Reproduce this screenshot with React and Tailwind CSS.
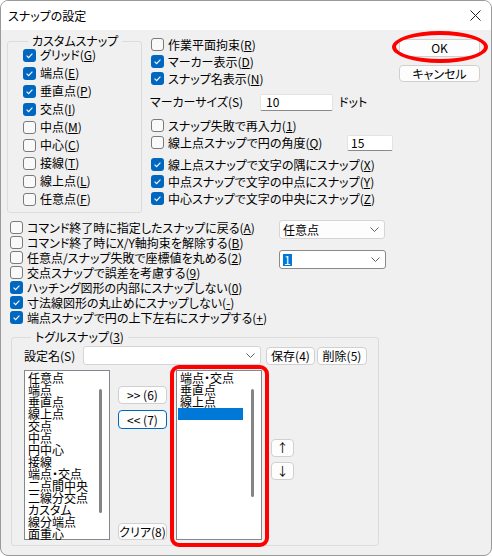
import React from 'react';

const customSnaps = [
  { label: 'グリッド', k: 'G', checked: true },
  { label: '端点', k: 'E', checked: true },
  { label: '垂直点', k: 'P', checked: true },
  { label: '交点', k: 'I', checked: true },
  { label: '中点', k: 'M', checked: false },
  { label: '中心', k: 'C', checked: false },
  { label: '接線', k: 'T', checked: false },
  { label: '線上点', k: 'L', checked: false },
  { label: '任意点', k: 'F', checked: false },
];

const textSnaps = [
  { label: '線上点スナップで文字の隅にスナップ', k: 'X' },
  { label: '中点スナップで文字の中点にスナップ', k: 'Y' },
  { label: '中心スナップで文字の中央にスナップ', k: 'Z' },
];

const options = [
  { label: 'コマンド終了時に指定したスナップに戻る', k: 'A', checked: false },
  { label: 'コマンド終了時にX/Y軸拘束を解除する', k: 'B', checked: false },
  { label: '任意点/スナップ失敗で座標値を丸める', k: '2', checked: false },
  { label: '交点スナップで誤差を考慮する', k: '9', checked: false },
  { label: 'ハッチング図形の内部にスナップしない', k: '0', checked: true },
  { label: '寸法線図形の丸止めにスナップしない', k: '-', checked: true },
  { label: '端点スナップで円の上下左右にスナップする', k: '+', checked: true },
];

const allSnaps = [
  '任意点', '端点', '垂直点', '線上点', '交点', '中点', '円中心', '接線',
  '端点・交点', '二点間中央', '二線分交点', 'カスタム', '線分端点', '面重心',
];

const toggleSnaps = ['端点・交点', '垂直点', '線上点'];

const Key = ({ k }) => (
  <span>
    (<u className="underline-offset-[1px]">{k}</u>)
  </span>
);

const CheckBox = ({ checked }) =>
  checked ? (
    <span className="w-[13px] h-[13px] shrink-0 rounded-[3px] bg-[#0067c0] flex items-center justify-center">
      <svg width="13" height="13" viewBox="0 0 13 13">
        <path d="M3.6 6.7 L5.6 8.6 L9.4 4.6" stroke="#fff" strokeWidth="1.1" fill="none" />
      </svg>
    </span>
  ) : (
    <span className="w-[13px] h-[13px] shrink-0 rounded-[3px] border border-[#7a7a7a] bg-[#f9f9f9]" />
  );

const CheckRow = ({ label, k, checked, className = 'h-[17px]' }) => (
  <div className={`flex items-center gap-1 ${className}`}>
    <CheckBox checked={checked} />
    <span className="whitespace-nowrap">
      {label}
      <Key k={k} />
    </span>
  </div>
);

const Chevron = () => (
  <svg width="9" height="5" viewBox="0 0 9 5">
    <path d="M0.5 0.5 L4.5 4.5 L8.5 0.5" stroke="#606060" strokeWidth="1" fill="none" />
  </svg>
);

const Btn = ({ children, className = '' }) => (
  <div
    className={`flex items-center justify-center rounded-[4px] border bg-[#fdfdfd] whitespace-nowrap leading-none ${className}`}
  >
    {children}
  </div>
);

const ListBox = ({ items, selected, barHeight }) => (
  <div className="w-[86px] h-[170px] border border-[#828790] bg-white flex">
    <div className="w-[65px] ml-[1px] pt-[1px] flex flex-col">
      {items.map((it) => (
        <div key={it} className="h-[12px] leading-[12px] pl-[2px] whitespace-nowrap">
          {it}
        </div>
      ))}
      {selected && <div className="h-[12px] bg-[#0078d7]" />}
    </div>
    <div className="flex-1 flex justify-end">
      <div className="w-[3px] mr-[7px] mt-[18px] rounded-full bg-[#858585]" style={{ height: barHeight }} />
    </div>
  </div>
);

export default function App() {
  return (
    <div className="w-[492px] h-[556px] border border-[#9a9a9a] rounded-[8px] overflow-hidden flex flex-col bg-[#f0f0f0] text-black text-[12px] leading-[16px] font-['Noto_Sans_CJK_JP',sans-serif] [font-feature-settings:'palt']">
      {/* Title bar */}
      <div className="h-[29px] shrink-0 bg-white flex items-center justify-between pl-[7px] pr-[10px]">
        <span>スナップの設定</span>
        <svg width="11" height="11" viewBox="0 0 11 11">
          <path d="M0.5 0.5 L10.5 10.5 M10.5 0.5 L0.5 10.5" stroke="#222" strokeWidth="1" />
        </svg>
      </div>

      {/* Top section */}
      <div className="flex items-start">
        <fieldset className="ml-[6px] mt-[4px] w-[135px] h-[179px] border border-[#dcdcdc] rounded-[3px] pl-[15px]">
          <legend className="ml-[5px] px-[4px] leading-[14px]">カスタムスナップ</legend>
          <div className="-mt-[2px] flex flex-col">
            {customSnaps.map((s) => (
              <CheckRow key={s.k} {...s} className="h-[18px]" />
            ))}
          </div>
        </fieldset>

        <div className="ml-[9px] mt-[6px] w-[242px] flex flex-col">
          <CheckRow label="作業平面拘束" k="R" checked={false} />
          <CheckRow label="マーカー表示" k="D" checked />
          <CheckRow label="スナップ名表示" k="N" checked />
          <div className="mt-[6px] h-[18px] flex items-center">
            <span className="w-[110px] -ml-[1px]">マーカーサイズ(S)</span>
            <div className="w-[73px] h-[17px] bg-white border border-[#e3e3e3] border-b-[#8a8a8a] rounded-[2px] pl-[5px] flex items-center">
              10
            </div>
            <span className="ml-[6px]">ドット</span>
          </div>
          <CheckRow label="スナップ失敗で再入力" k="1" checked={false} className="h-[17px] mt-[6px]" />
          <div className="h-[17px] flex items-center">
            <div className="w-[196px]">
              <CheckRow label="線上点スナップで円の角度" k="Q" checked={false} />
            </div>
            <div className="w-[46px] h-[16px] bg-white border border-[#e3e3e3] border-b-[#8a8a8a] rounded-[2px] pl-[3px] flex items-center">
              15
            </div>
          </div>
          <div className="mt-[5px] flex flex-col">
            {textSnaps.map((s) => (
              <CheckRow key={s.k} {...s} checked />
            ))}
          </div>
        </div>

        <div className="ml-[6px] mt-[9px] flex flex-col">
          <div className="relative">
            <Btn className="w-[81px] h-[18px] border-[#d0d0d0]">OK</Btn>
            <div className="absolute -left-[7px] -top-[8px] -right-[8px] -bottom-[6px] border-[4px] border-[#ff0000] rounded-[50%]" />
          </div>
          <Btn className="w-[81px] h-[17px] mt-[8px] border-[#d0d0d0]">キャンセル</Btn>
        </div>
      </div>

      {/* Options */}
      <div className="mt-[7px] flex items-start">
        <div className="ml-[9px] w-[269px] flex flex-col">
          {options.map((o) => (
            <CheckRow key={o.k} {...o} className="h-[15px]" />
          ))}
        </div>
        <div className="flex flex-col">
          <div className="w-[106px] h-[19px] bg-[#fdfdfd] border border-[#d5d5d5] rounded-[3px] pl-[3px] pr-[5px] flex items-center justify-between">
            <span>任意点</span>
            <Chevron />
          </div>
          <div className="mt-[11px] w-[107px] h-[19px] bg-white border border-[#8a8a8a] rounded-[3px] pl-[3px] pr-[5px] flex items-center justify-between">
            <span className="bg-[#0078d7] text-white leading-[12px] px-[1px]">1</span>
            <Chevron />
          </div>
        </div>
      </div>

      {/* Toggle snap */}
      <fieldset className="ml-[10px] mt-[5px] w-[368px] h-[216px] border border-[#dcdcdc] rounded-[3px] pl-[12px]">
        <legend className="ml-[7px] px-[4px] leading-[14px]">
          トグルスナップ<Key k="3" />
        </legend>
        <div className="mt-[2px] flex items-center">
          <span className="w-[59px]">設定名(S)</span>
          <div className="w-[178px] h-[19px] bg-white border border-[#d5d5d5] rounded-[3px] pr-[5px] flex items-center justify-end">
            <Chevron />
          </div>
          <Btn className="ml-[5px] w-[49px] h-[18px] border-[#d0d0d0]">保存(4)</Btn>
          <Btn className="ml-[2px] w-[50px] h-[18px] border-[#d0d0d0]">削除(5)</Btn>
        </div>
        <div className="mt-[5px] flex items-start">
          <ListBox items={allSnaps} barHeight={124} />
          <div className="ml-[8px] w-[49px] h-[170px] flex flex-col">
            <Btn className="mt-[16px] h-[18px] border-[#d0d0d0]">&gt;&gt; (6)</Btn>
            <Btn className="mt-[6px] h-[19px] border-[#0067c0]">&lt;&lt; (7)</Btn>
            <Btn className="mt-auto h-[17px] border-[#d0d0d0]">クリア(8)</Btn>
          </div>
          <div className="ml-[9px] relative">
            <ListBox items={toggleSnaps} selected barHeight={108} />
            <div className="absolute -left-[6px] -top-[5px] -right-[7px] -bottom-[7px] border-[4px] border-[#ff0000] rounded-[9px]" />
          </div>
          <div className="ml-[9px] mt-[69px] flex flex-col">
            <Btn className="w-[23px] h-[18px] border-[#d0d0d0]">↑</Btn>
            <Btn className="mt-[5px] w-[23px] h-[18px] border-[#d0d0d0]">↓</Btn>
          </div>
        </div>
      </fieldset>
    </div>
  );
}
